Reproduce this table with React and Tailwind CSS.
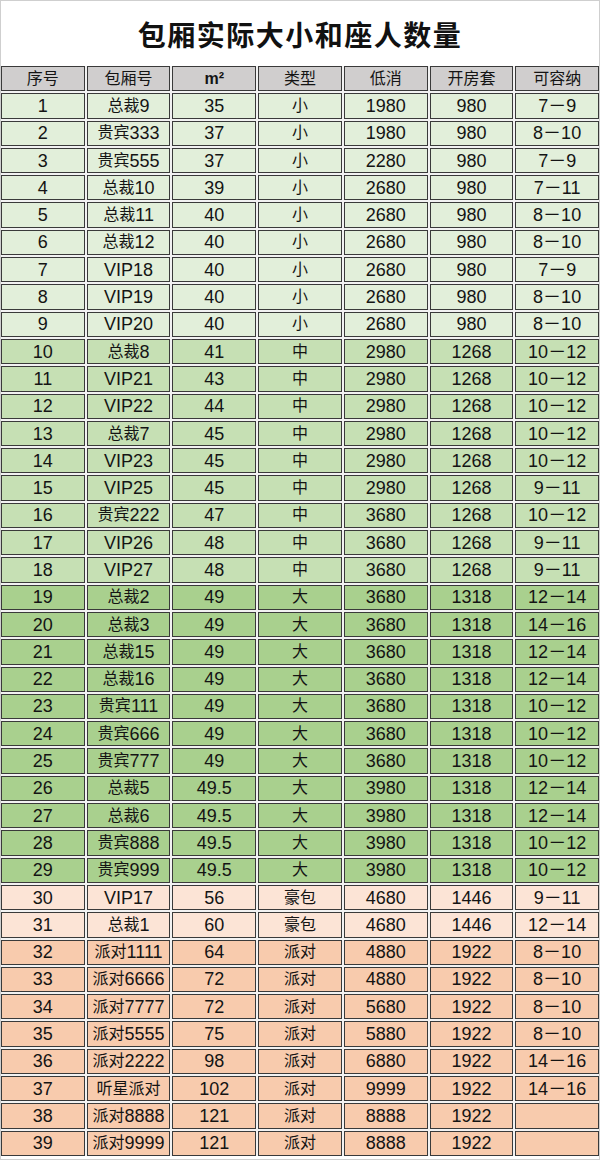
import React from "react";

const rows = [
  [1, "总裁9", "35", "小", "1980", "980", "7－9"],
  [2, "贵宾333", "37", "小", "1980", "980", "8－10"],
  [3, "贵宾555", "37", "小", "2280", "980", "7－9"],
  [4, "总裁10", "39", "小", "2680", "980", "7－11"],
  [5, "总裁11", "40", "小", "2680", "980", "8－10"],
  [6, "总裁12", "40", "小", "2680", "980", "8－10"],
  [7, "VIP18", "40", "小", "2680", "980", "7－9"],
  [8, "VIP19", "40", "小", "2680", "980", "8－10"],
  [9, "VIP20", "40", "小", "2680", "980", "8－10"],
  [10, "总裁8", "41", "中", "2980", "1268", "10－12"],
  [11, "VIP21", "43", "中", "2980", "1268", "10－12"],
  [12, "VIP22", "44", "中", "2980", "1268", "10－12"],
  [13, "总裁7", "45", "中", "2980", "1268", "10－12"],
  [14, "VIP23", "45", "中", "2980", "1268", "10－12"],
  [15, "VIP25", "45", "中", "2980", "1268", "9－11"],
  [16, "贵宾222", "47", "中", "3680", "1268", "10－12"],
  [17, "VIP26", "48", "中", "3680", "1268", "9－11"],
  [18, "VIP27", "48", "中", "3680", "1268", "9－11"],
  [19, "总裁2", "49", "大", "3680", "1318", "12－14"],
  [20, "总裁3", "49", "大", "3680", "1318", "14－16"],
  [21, "总裁15", "49", "大", "3680", "1318", "12－14"],
  [22, "总裁16", "49", "大", "3680", "1318", "12－14"],
  [23, "贵宾111", "49", "大", "3680", "1318", "10－12"],
  [24, "贵宾666", "49", "大", "3680", "1318", "10－12"],
  [25, "贵宾777", "49", "大", "3680", "1318", "10－12"],
  [26, "总裁5", "49.5", "大", "3980", "1318", "12－14"],
  [27, "总裁6", "49.5", "大", "3980", "1318", "12－14"],
  [28, "贵宾888", "49.5", "大", "3980", "1318", "10－12"],
  [29, "贵宾999", "49.5", "大", "3980", "1318", "10－12"],
  [30, "VIP17", "56", "豪包", "4680", "1446", "9－11"],
  [31, "总裁1", "60", "豪包", "4680", "1446", "12－14"],
  [32, "派对1111", "64", "派对", "4880", "1922", "8－10"],
  [33, "派对6666", "72", "派对", "4880", "1922", "8－10"],
  [34, "派对7777", "72", "派对", "5680", "1922", "8－10"],
  [35, "派对5555", "75", "派对", "5880", "1922", "8－10"],
  [36, "派对2222", "98", "派对", "6880", "1922", "14－16"],
  [37, "听星派对", "102", "派对", "9999", "1922", "14－16"],
  [38, "派对8888", "121", "派对", "8888", "1922", ""],
  [39, "派对9999", "121", "派对", "8888", "1922", ""],
];

const headers = ["序号", "包厢号", "㎡", "类型", "低消", "开房套", "可容纳"];

function rowBg(n) {
  if (n <= 9) return "bg-[#e2efda]";
  if (n <= 18) return "bg-[#c6e0b4]";
  if (n <= 29) return "bg-[#a9d08e]";
  if (n <= 31) return "bg-[#fce4d6]";
  return "bg-[#f8cbad]";
}

function Txt({ s }) {
  const parts = [];
  let buf = "";
  let cjk = null;
  for (const ch of String(s)) {
    const isC = /[\u3000-\u9fff\uff00-\uffef]/.test(ch) && ch !== "－";
    if (cjk === null) cjk = isC;
    if (isC !== cjk) {
      parts.push([cjk, buf]);
      buf = "";
      cjk = isC;
    }
    buf += ch;
  }
  if (buf) parts.push([cjk, buf]);
  return (
    <>
      {parts.map(([c, t], i) =>
        c ? (
          <span key={i} className="text-[16px]">{t}</span>
        ) : (
          <span key={i}>{t}</span>
        )
      )}
    </>
  );
}

function Cell({ bg, children }) {
  return (
    <div
      className={`h-[25.3px] border border-[#3a3a3a] ${bg} flex items-center justify-center text-[18px] leading-none text-[#141414]`}
    >
      {children}
    </div>
  );
}

export default function App() {
  return (
    <div
      className="w-[600px] h-[1160px] bg-white border border-[#cfcfcf] overflow-hidden"
      style={{ fontFamily: '"Liberation Sans", "Noto Sans CJK SC", sans-serif' }}
    >
      <div className="h-[65px] flex items-center justify-center">
        <h1
          className="text-[28px] font-bold tracking-[1.5px] text-[#111]"
          style={{ fontFamily: '"Noto Sans CJK SC", sans-serif' }}
        >
          包厢实际大小和座人数量
        </h1>
      </div>
      <div className="grid grid-cols-7 gap-x-[2px] gap-y-[2px] bg-[#f2f2f2]">
        {headers.map((h, i) => (
          <Cell key={"h" + i} bg="bg-[#d0cece]">
            {h === "㎡" ? (
              <span className="text-[16px] font-bold">m²</span>
            ) : (
              <span className="text-[16px]">{h}</span>
            )}
          </Cell>
        ))}
        {rows.map((r) =>
          r.map((v, j) => (
            <Cell key={r[0] + "-" + j} bg={rowBg(r[0])}>
              <Txt s={v} />
            </Cell>
          ))
        )}
      </div>
    </div>
  );
}
